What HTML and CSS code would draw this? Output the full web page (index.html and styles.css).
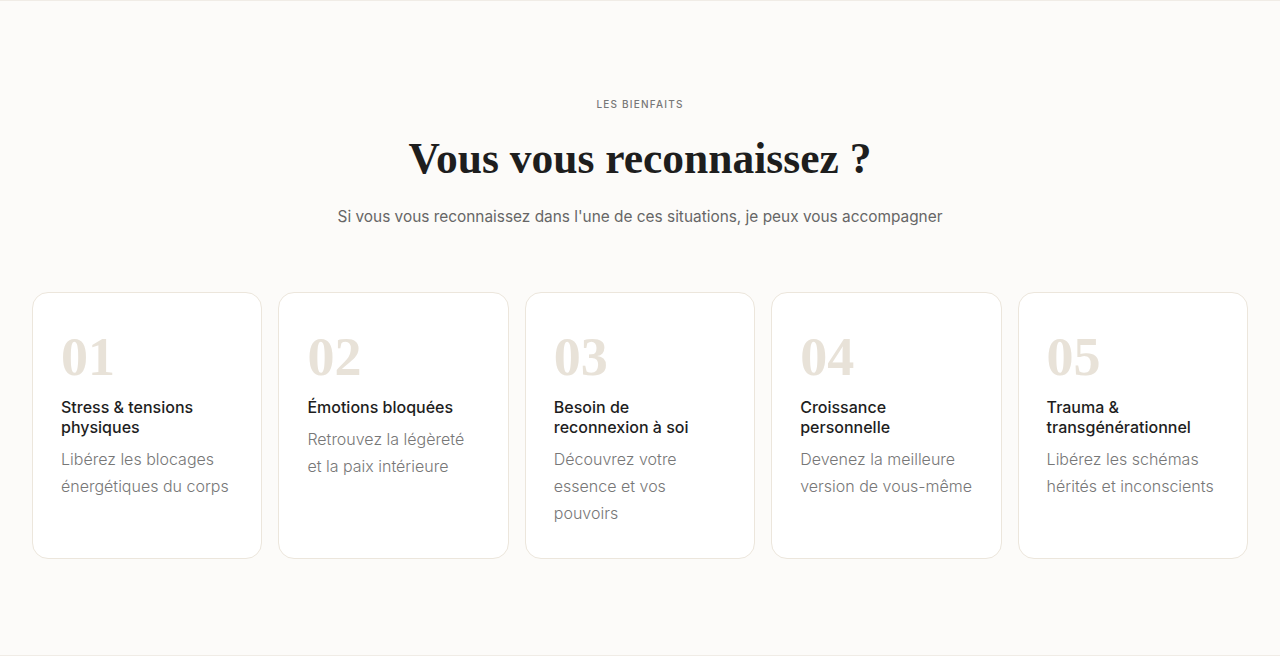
FILE: index.html
```html
<!DOCTYPE html>
<html lang="fr">

<head>
    <meta charset="UTF-8">
    <meta name="viewport" content="width=device-width, initial-scale=1.0">
    <title>Les bienfaits</title>
    <link rel="stylesheet" href="styles.css">
</head>

<body>
    <section class="benefits">
        <div class="benefits-head">
            <span class="eyebrow">Les bienfaits</span>
            <h2>Vous vous reconnaissez ?</h2>
            <p class="lead">Si vous vous reconnaissez dans l'une de ces situations, je peux vous accompagner</p>
        </div>

        <div class="benefit-grid">
            <div class="benefit-card">
                <div class="benefit-num">01</div>
                <h3>Stress &amp; tensions physiques</h3>
                <p>Libérez les blocages énergétiques du corps</p>
            </div>
            <div class="benefit-card">
                <div class="benefit-num">02</div>
                <h3>Émotions bloquées</h3>
                <p>Retrouvez la légèreté et la paix intérieure</p>
            </div>
            <div class="benefit-card">
                <div class="benefit-num">03</div>
                <h3>Besoin de reconnexion à soi</h3>
                <p>Découvrez votre essence et vos pouvoirs</p>
            </div>
            <div class="benefit-card">
                <div class="benefit-num">04</div>
                <h3>Croissance personnelle</h3>
                <p>Devenez la meilleure version de vous-même</p>
            </div>
            <div class="benefit-card">
                <div class="benefit-num">05</div>
                <h3>Trauma &amp; transgénérationnel</h3>
                <p>Libérez les schémas hérités et inconscients</p>
            </div>
        </div>
    </section>
</body>

</html>
```

FILE: styles.css
```css
body {
    margin: 0;
    padding: 0;
    font-family: 'Inter', 'Liberation Sans', sans-serif;
    background-color: #fcfbf9;
    color: #1e1e1e;
}

.benefits {
    border-top: 1px solid #f0ece6;
    border-bottom: 1px solid #f0ece6;
    padding: 95px 32px 96px;
    height: 656px;
    box-sizing: border-box;
}

.benefits-head {
    text-align: center;
}

.eyebrow {
    display: block;
    font-size: 10px;
    line-height: 16px;
    font-weight: 500;
    letter-spacing: 1.2px;
    text-transform: uppercase;
    color: #777;
}

.benefits-head h2 {
    margin: 20px 0 0;
    font-family: 'Liberation Serif', serif;
    font-size: 43.5px;
    line-height: 53px;
    font-weight: 700;
    color: #1e1e1e;
}

.lead {
    margin: 19px 0 0;
    font-size: 15.4px;
    line-height: 26px;
    color: #666;
}

.benefit-grid {
    display: grid;
    grid-template-columns: repeat(5, 1fr);
    gap: 16px;
    margin-top: 62px;
}

.benefit-card {
    background-color: #fff;
    border: 1px solid #ece6dc;
    border-radius: 16px;
    padding: 28px 28px 31px;
    box-sizing: border-box;
}

/* big serif index above each card title */
.benefit-num {
    font-family: 'Liberation Serif', serif;
    font-size: 54px;
    line-height: 64px;
    font-weight: 700;
    color: #e8e2d8;
    margin-top: 4px;
}

.benefit-card h3 {
    margin: 8px 0 0;
    font-size: 16px;
    line-height: 20px;
    font-weight: 500;
    color: #1e1e1e;
}

.benefit-card p {
    margin: 9px 0 0;
    font-size: 16px;
    line-height: 27px;
    font-weight: 300;
    color: #777;
}
```
